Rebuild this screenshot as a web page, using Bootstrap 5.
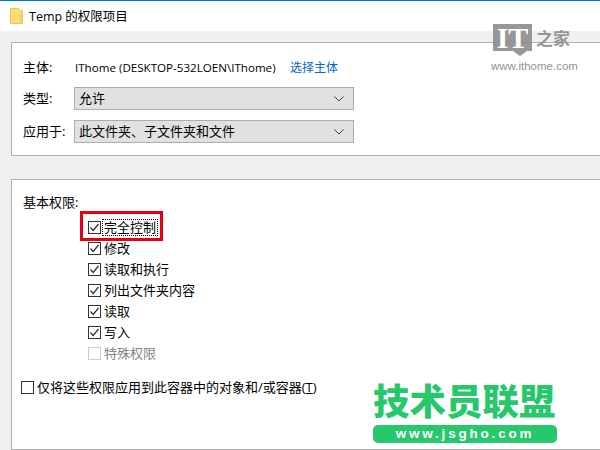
<!DOCTYPE html>
<html lang="zh">
<head>
<meta charset="utf-8">
<title>Temp 的权限项目</title>
<link rel="stylesheet" href="https://cdn.jsdelivr.net/npm/bootstrap@5.3.0/dist/css/bootstrap.min.css">
<style>
html,body{height:100%;overflow:hidden}
body{background:#f0f0f0;font-family:"Open Sans","Noto Sans CJK SC",sans-serif;font-size:13px;line-height:21px;color:#000;position:relative}
.titlebar{height:31px;background:#fff;border-top:1px solid #0078d7;padding-left:10px;gap:6px}
.titlebar .ttl{font-size:12.5px;color:#000}
.pane{background:#fff;border:1px solid #b0b0b0;border-right:0;margin-left:11px}
.pane-a{margin-top:11px;height:114px;padding:14px 0 0 11px}
.pane-b{margin-top:23px;height:271px;padding:12px 0 0 11px}
.lbl{width:51px}
.rowa{height:21px}
.who{width:216px;white-space:nowrap;font-size:11.6px;padding-left:1px}
.pick{color:#0066cc;text-decoration:none;font-size:12px}
.combo{width:280px;height:23px;background:#e1e1e1;border:1px solid #adadad;padding:0 9px 0 4px;color:#000}
.gaprow{margin-top:10px}
.gaprow-first{margin-top:9px}
.perm-list{margin:4px 0 0 65px}
.perm{height:21px;gap:3px}
.box{width:13px;height:13px;border:1px solid #333;background:#fff;flex:none}
.box svg{display:block}
.box-off{border-color:#ccc}
.dim{color:#838383}
.focus-t{outline:1px dotted #000;outline-offset:0;line-height:15px;padding:0 1px;margin-left:-1px}
.apply{margin:13px 0 0 -2px;gap:3px}
.redmark{position:absolute;left:80px;top:211px;width:83px;height:30px;border:3px solid #e60012}
.it-mark{position:absolute;left:491px;top:24px;width:90px;opacity:.92}
.it-square{width:39px;height:27px;margin-left:2px;background:#8f8f8f;color:#fff;font:700 30px/27px "Liberation Serif",serif;text-align:center;position:relative}
.it-square::after{content:"";position:absolute;left:20px;top:27px;border-style:solid;border-width:5px 7px 0 7px;border-color:#8f8f8f transparent transparent transparent}
.it-zh{position:absolute;left:45px;top:2px;font:700 17px/24px "Noto Sans CJK SC",sans-serif;color:#8f8f8f;white-space:nowrap}
.it-url{margin-top:9px;font:11.5px/12px "Liberation Sans",sans-serif;color:#8c8c8c;white-space:nowrap}
.js-mark{position:absolute;left:373px;top:377px;width:184px}
.js-zh{font:900 36.5px/46px "Noto Sans CJK SC",sans-serif;color:#27c86c;white-space:nowrap}
.js-url{height:18px;margin-top:2px;background:#27c86c;border-radius:5px;color:#fff;font:700 13.500px/18px "Liberation Sans",sans-serif;text-align:center;letter-spacing:2.8px;white-space:nowrap}
</style>
</head>
<body>
<div class="titlebar d-flex align-items-center">
  <svg width="13" height="16" viewBox="0 0 13 16"><path d="M.5.5h8l2 2h2v13H.5z" fill="#fbdc75" stroke="#e8c35a"/><path d="M10 15V6h2.500v9z" fill="#f5cf62"/></svg>
  <span class="ttl">Temp 的权限项目</span>
</div>

<div class="pane pane-a">
  <div class="d-flex align-items-center rowa">
    <span class="lbl">主体:</span>
    <span class="who">IThome (DESKTOP-532LOEN\IThome)</span>
    <a class="pick" href="#">选择主体</a>
  </div>
  <div class="d-flex align-items-center gaprow-first">
    <span class="lbl">类型:</span>
    <div class="combo d-flex align-items-center justify-content-between"><span>允许</span>
      <svg width="10" height="6" viewBox="0 0 10 6"><path d="M.5.5 5 5 9.500.5" fill="none" stroke="#404040"/></svg></div>
  </div>
  <div class="d-flex align-items-center gaprow">
    <span class="lbl">应用于:</span>
    <div class="combo d-flex align-items-center justify-content-between"><span>此文件夹、子文件夹和文件</span>
      <svg width="10" height="6" viewBox="0 0 10 6"><path d="M.5.5 5 5 9.500.5" fill="none" stroke="#404040"/></svg></div>
  </div>
</div>

<div class="pane pane-b">
  <div>基本权限:</div>
  <div class="perm-list">
    <div class="perm d-flex align-items-center"><span class="box"><svg width="11" height="11" viewBox="0 0 11 11"><path d="M1.500 5.500 4.200 8.500 9.500 2" fill="none" stroke="#333" stroke-width="1.300"/></svg></span><span class="focus-t">完全控制</span></div>
    <div class="perm d-flex align-items-center"><span class="box"><svg width="11" height="11" viewBox="0 0 11 11"><path d="M1.500 5.500 4.200 8.500 9.500 2" fill="none" stroke="#333" stroke-width="1.300"/></svg></span><span>修改</span></div>
    <div class="perm d-flex align-items-center"><span class="box"><svg width="11" height="11" viewBox="0 0 11 11"><path d="M1.500 5.500 4.200 8.500 9.500 2" fill="none" stroke="#333" stroke-width="1.300"/></svg></span><span>读取和执行</span></div>
    <div class="perm d-flex align-items-center"><span class="box"><svg width="11" height="11" viewBox="0 0 11 11"><path d="M1.500 5.500 4.200 8.500 9.500 2" fill="none" stroke="#333" stroke-width="1.300"/></svg></span><span>列出文件夹内容</span></div>
    <div class="perm d-flex align-items-center"><span class="box"><svg width="11" height="11" viewBox="0 0 11 11"><path d="M1.500 5.500 4.200 8.500 9.500 2" fill="none" stroke="#333" stroke-width="1.300"/></svg></span><span>读取</span></div>
    <div class="perm d-flex align-items-center"><span class="box"><svg width="11" height="11" viewBox="0 0 11 11"><path d="M1.500 5.500 4.200 8.500 9.500 2" fill="none" stroke="#333" stroke-width="1.300"/></svg></span><span>写入</span></div>
    <div class="perm d-flex align-items-center"><span class="box box-off"></span><span class="dim">特殊权限</span></div>
  </div>
  <div class="apply perm d-flex align-items-center"><span class="box"></span><span>仅将这些权限应用到此容器中的对象和/或容器(<u>T</u>)</span></div>
</div>

<div class="redmark"></div>
<div class="it-mark">
  <div class="it-square">IT</div>
  <div class="it-zh">之家</div>
  <div class="it-url">www.ithome.com</div>
</div>
<div class="js-mark">
  <div class="js-zh">技术员联盟</div>
  <div class="js-url">www.jsgho.com</div>
</div>
<script src="https://cdn.jsdelivr.net/npm/bootstrap@5.3.0/dist/js/bootstrap.bundle.min.js"></script>
</body>
</html>
